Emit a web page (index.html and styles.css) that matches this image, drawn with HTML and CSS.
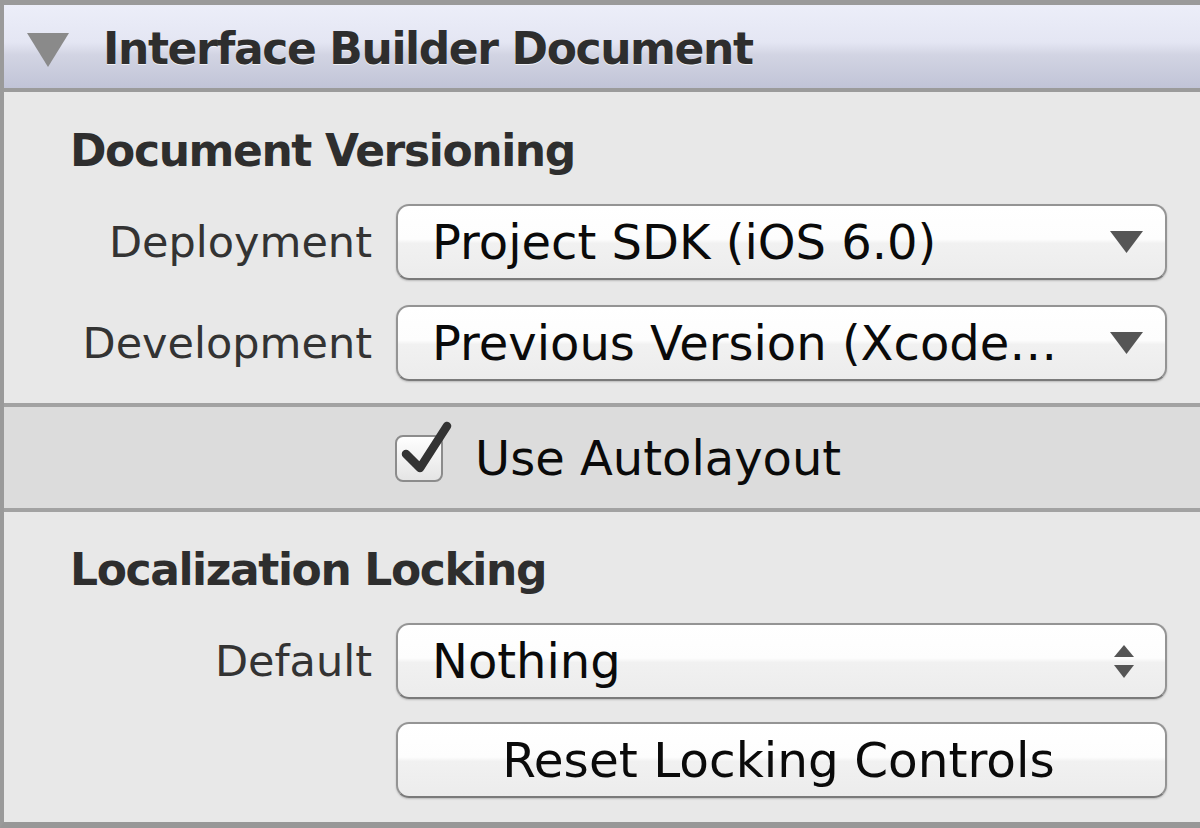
FILE: index.html
```html
<!DOCTYPE html>
<html>
<head>
<meta charset="utf-8">
<link rel="stylesheet" href="styles.css">
</head>
<body>
<div class="panel">
  <div class="header">
    <svg class="disclosure" width="42" height="34" viewBox="0 0 42 34"><polygon points="0,0 42,0 21,34" fill="#8a8a8a"/></svg>
    <span class="header-title">Interface Builder Document</span>
  </div>

  <div class="section">
    <div class="section-title">Document Versioning</div>
    <div class="row">
      <div class="label">Deployment</div>
      <div class="popup">
        <span class="popup-text">Project SDK (iOS 6.0)</span>
        <svg class="arrow" width="33" height="22" viewBox="0 0 33 22"><polygon points="0,0 33,0 16.5,22" fill="#555"/></svg>
      </div>
    </div>
    <div class="row">
      <div class="label">Development</div>
      <div class="popup">
        <span class="popup-text">Previous Version (Xcode…</span>
        <svg class="arrow" width="33" height="22" viewBox="0 0 33 22"><polygon points="0,0 33,0 16.5,22" fill="#555"/></svg>
      </div>
    </div>
  </div>

  <div class="band">
    <div class="band-spacer"></div>
    <label class="checkbox">
      <svg class="check" width="60" height="62" viewBox="0 0 60 62">
        <defs>
          <linearGradient id="cb" x1="0" y1="0" x2="0" y2="1">
            <stop offset="0" stop-color="#ffffff"/>
            <stop offset="1" stop-color="#e4e4e4"/>
          </linearGradient>
        </defs>
        <rect x="1" y="15" width="46" height="45" rx="7" fill="url(#cb)" stroke="#8c8c8c" stroke-width="2"/>
        <path d="M11 33 L25 47 L52 5" fill="none" stroke="#333" stroke-width="8.5" stroke-linecap="round" stroke-linejoin="round"/>
      </svg>
      <span class="check-text">Use Autolayout</span>
    </label>
  </div>

  <div class="section last">
    <div class="section-title">Localization Locking</div>
    <div class="row">
      <div class="label">Default</div>
      <div class="popup">
        <span class="popup-text">Nothing</span>
        <svg class="stepper" width="20" height="33" viewBox="0 0 20 33"><polygon points="10,0 20,12 0,12" fill="#555"/><polygon points="0,20 20,20 10,33" fill="#555"/></svg>
      </div>
    </div>
    <div class="row">
      <div class="label"></div>
      <div class="popup button">Reset Locking Controls</div>
    </div>
  </div>
</div>
</body>
</html>
```

FILE: styles.css
```css
html, body {
  margin: 0;
  padding: 0;
  background: #e8e8e8;
}

.panel {
  width: 1200px;
  height: 828px;
  box-sizing: border-box;
  border-top: 5px solid #9a9a9a;
  border-left: 4px solid #9a9a9a;
  border-bottom: 6px solid #979797;
  background: #e8e8e8;
  font-family: "DejaVu Sans", "Liberation Sans", sans-serif;
  display: flex;
  flex-direction: column;
  overflow: hidden;
}

.header {
  height: 87px;
  box-sizing: border-box;
  padding-top: 4px;
  border-bottom: 4px solid #9b9b9b;
  background: linear-gradient(#eceef9 0%, #e4e6f3 45%, #d2d4e3 60%, #c1c4d7 100%);
  display: flex;
  align-items: center;
  flex: none;
}

.disclosure {
  margin-left: 23px;
  margin-right: 34px;
  margin-top: 3px;
  flex: none;
}

.header-title {
  font-weight: bold;
  font-size: 44px;
  line-height: 44px;
  letter-spacing: -1.4px;
  color: #2e2e2e;
  text-shadow: 0 1px 0 rgba(255,255,255,0.7);
}

.section {
  height: 311px;
  box-sizing: border-box;
  padding-top: 37px;
  flex: none;
}

.section.last {
  height: 310px;
  padding-top: 36px;
}

.section-title {
  font-weight: bold;
  font-size: 44px;
  line-height: 44px;
  letter-spacing: -1.4px;
  color: #2e2e2e;
  margin-left: 66px;
  margin-bottom: 31px;
}

.row {
  display: flex;
  align-items: center;
  margin-bottom: 25px;
}

.last .row {
  margin-bottom: 23px;
}

.label {
  width: 368px;
  box-sizing: border-box;
  text-align: right;
  font-size: 43px;
  color: #333;
  margin-right: 24px;
  flex: none;
}

.popup {
  width: 771px;
  height: 76px;
  box-sizing: border-box;
  border: 2px solid #949494;
  border-bottom-color: #7a7a7a;
  border-radius: 13px;
  background: linear-gradient(#ffffff 0%, #fdfdfd 46%, #f1f1f1 52%, #ececec 100%);
  box-shadow: 0 1px 2px rgba(0,0,0,0.2);
  display: flex;
  align-items: center;
  padding-left: 34px;
  padding-right: 22px;
  font-size: 48px;
  color: #0a0a0a;
  flex: none;
}

.popup-text {
  flex: 1;
  white-space: nowrap;
}

.arrow {
  flex: none;
}

.stepper {
  flex: none;
  margin-right: 9px;
}

.button {
  justify-content: center;
  padding-left: 0;
  padding-right: 6px;
  font-size: 48.5px;
}

.band {
  height: 109px;
  box-sizing: border-box;
  border-top: 4px solid #a2a2a2;
  border-bottom: 4px solid #a2a2a2;
  background: #dcdcdc;
  display: flex;
  align-items: center;
  flex: none;
}

.band-spacer {
  width: 391px;
  flex: none;
}

.checkbox {
  display: flex;
  align-items: center;
}

.check {
  flex: none;
  margin-top: -12px;
}

.check-text {
  font-size: 48px;
  color: #0a0a0a;
  margin-left: 20px;
}
```
